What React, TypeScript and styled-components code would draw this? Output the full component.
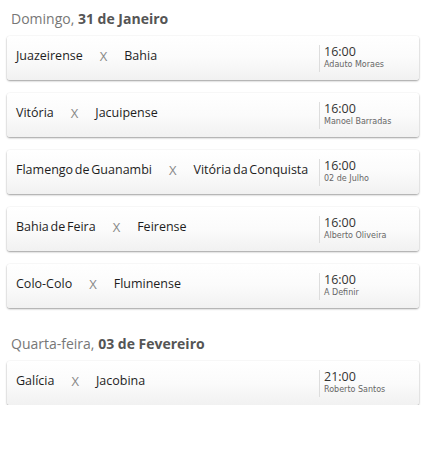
import React from "react";
import styled, { createGlobalStyle } from "styled-components";

const GlobalStyle = createGlobalStyle`
  body {
    margin: 0;
    background: #fff;
    font-family: "Open Sans", "Noto Sans", sans-serif;
  }
`;

type Match = { home: string; away: string; time: string; place: string };
type Day = { weekday: string; date: string; matches: Match[] };

const days: Day[] = [
  {
    weekday: "Domingo",
    date: "31 de Janeiro",
    matches: [
      { home: "Juazeirense", away: "Bahia", time: "16:00", place: "Adauto Moraes" },
      { home: "Vitória", away: "Jacuipense", time: "16:00", place: "Manoel Barradas" },
      { home: "Flamengo de Guanambi", away: "Vitória da Conquista", time: "16:00", place: "02 de Julho" },
      { home: "Bahia de Feira", away: "Feirense", time: "16:00", place: "Alberto Oliveira" },
      { home: "Colo-Colo", away: "Fluminense", time: "16:00", place: "A Definir" },
    ],
  },
  {
    weekday: "Quarta-feira",
    date: "03 de Fevereiro",
    matches: [
      { home: "Galícia", away: "Jacobina", time: "21:00", place: "Roberto Santos" },
    ],
  },
];

export default function App() {
  return (
    <>
      <GlobalStyle />
      <Page>
        {days.map((d) => (
          <Section key={d.date}>
            <DayTitle>
              {d.weekday}, <strong>{d.date}</strong>
            </DayTitle>
            <List>
              {d.matches.map((m) => (
                <Card key={m.home}>
                  <Teams>
                    <Team>{m.home}</Team>
                    <Versus>X</Versus>
                    <Team>{m.away}</Team>
                  </Teams>
                  <Info>
                    <Time>{m.time}</Time>
                    <Place>{m.place}</Place>
                  </Info>
                </Card>
              ))}
            </List>
          </Section>
        ))}
      </Page>
    </>
  );
}

const Page = styled.div`
  width: 412px;
  padding: 9px 0 0 7px;
  display: flex;
  flex-direction: column;
  gap: 26px;
`;

const Section = styled.section`
  display: flex;
  flex-direction: column;
  gap: 8px;
`;

const DayTitle = styled.h2`
  margin: 0 0 0 4px;
  font-size: 14px;
  line-height: 19px;
  font-weight: 400;
  color: #777;

  strong {
    font-weight: 700;
    color: #555;
  }
`;

const List = styled.div`
  display: flex;
  flex-direction: column;
  gap: 13px;
`;

const Card = styled.div`
  height: 44px;
  box-sizing: border-box;
  display: flex;
  align-items: center;
  padding-left: 9px;
  border-radius: 3px;
  background: linear-gradient(#ffffff 0%, #fbfbfb 50%, #f1f1f1 100%);
  box-shadow: 0 1px 2px rgba(0, 0, 0, 0.38), 0 0 1px rgba(0, 0, 0, 0.12);
`;

const Teams = styled.div`
  width: 303px;
  margin-bottom: 5px;
  display: flex;
  align-items: center;
  gap: 17px;
  font-size: 12.5px;
  word-spacing: -1.5px;
  color: #1e1e1e;
`;

const Team = styled.span`
  white-space: nowrap;
`;

const Versus = styled.span`
  color: #888;
  font-size: 13px;
`;

const Info = styled.div`
  border-left: 1px solid #ddd;
  padding: 0 0 2px 4px;
  display: flex;
  flex-direction: column;
  align-self: center;
`;

const Time = styled.span`
  font-size: 12.5px;
  line-height: 14px;
  color: #333;
`;

const Place = styled.span`
  font-family: "DejaVu Sans", sans-serif;
  font-size: 8px;
  line-height: 11px;
  color: #666;
`;
